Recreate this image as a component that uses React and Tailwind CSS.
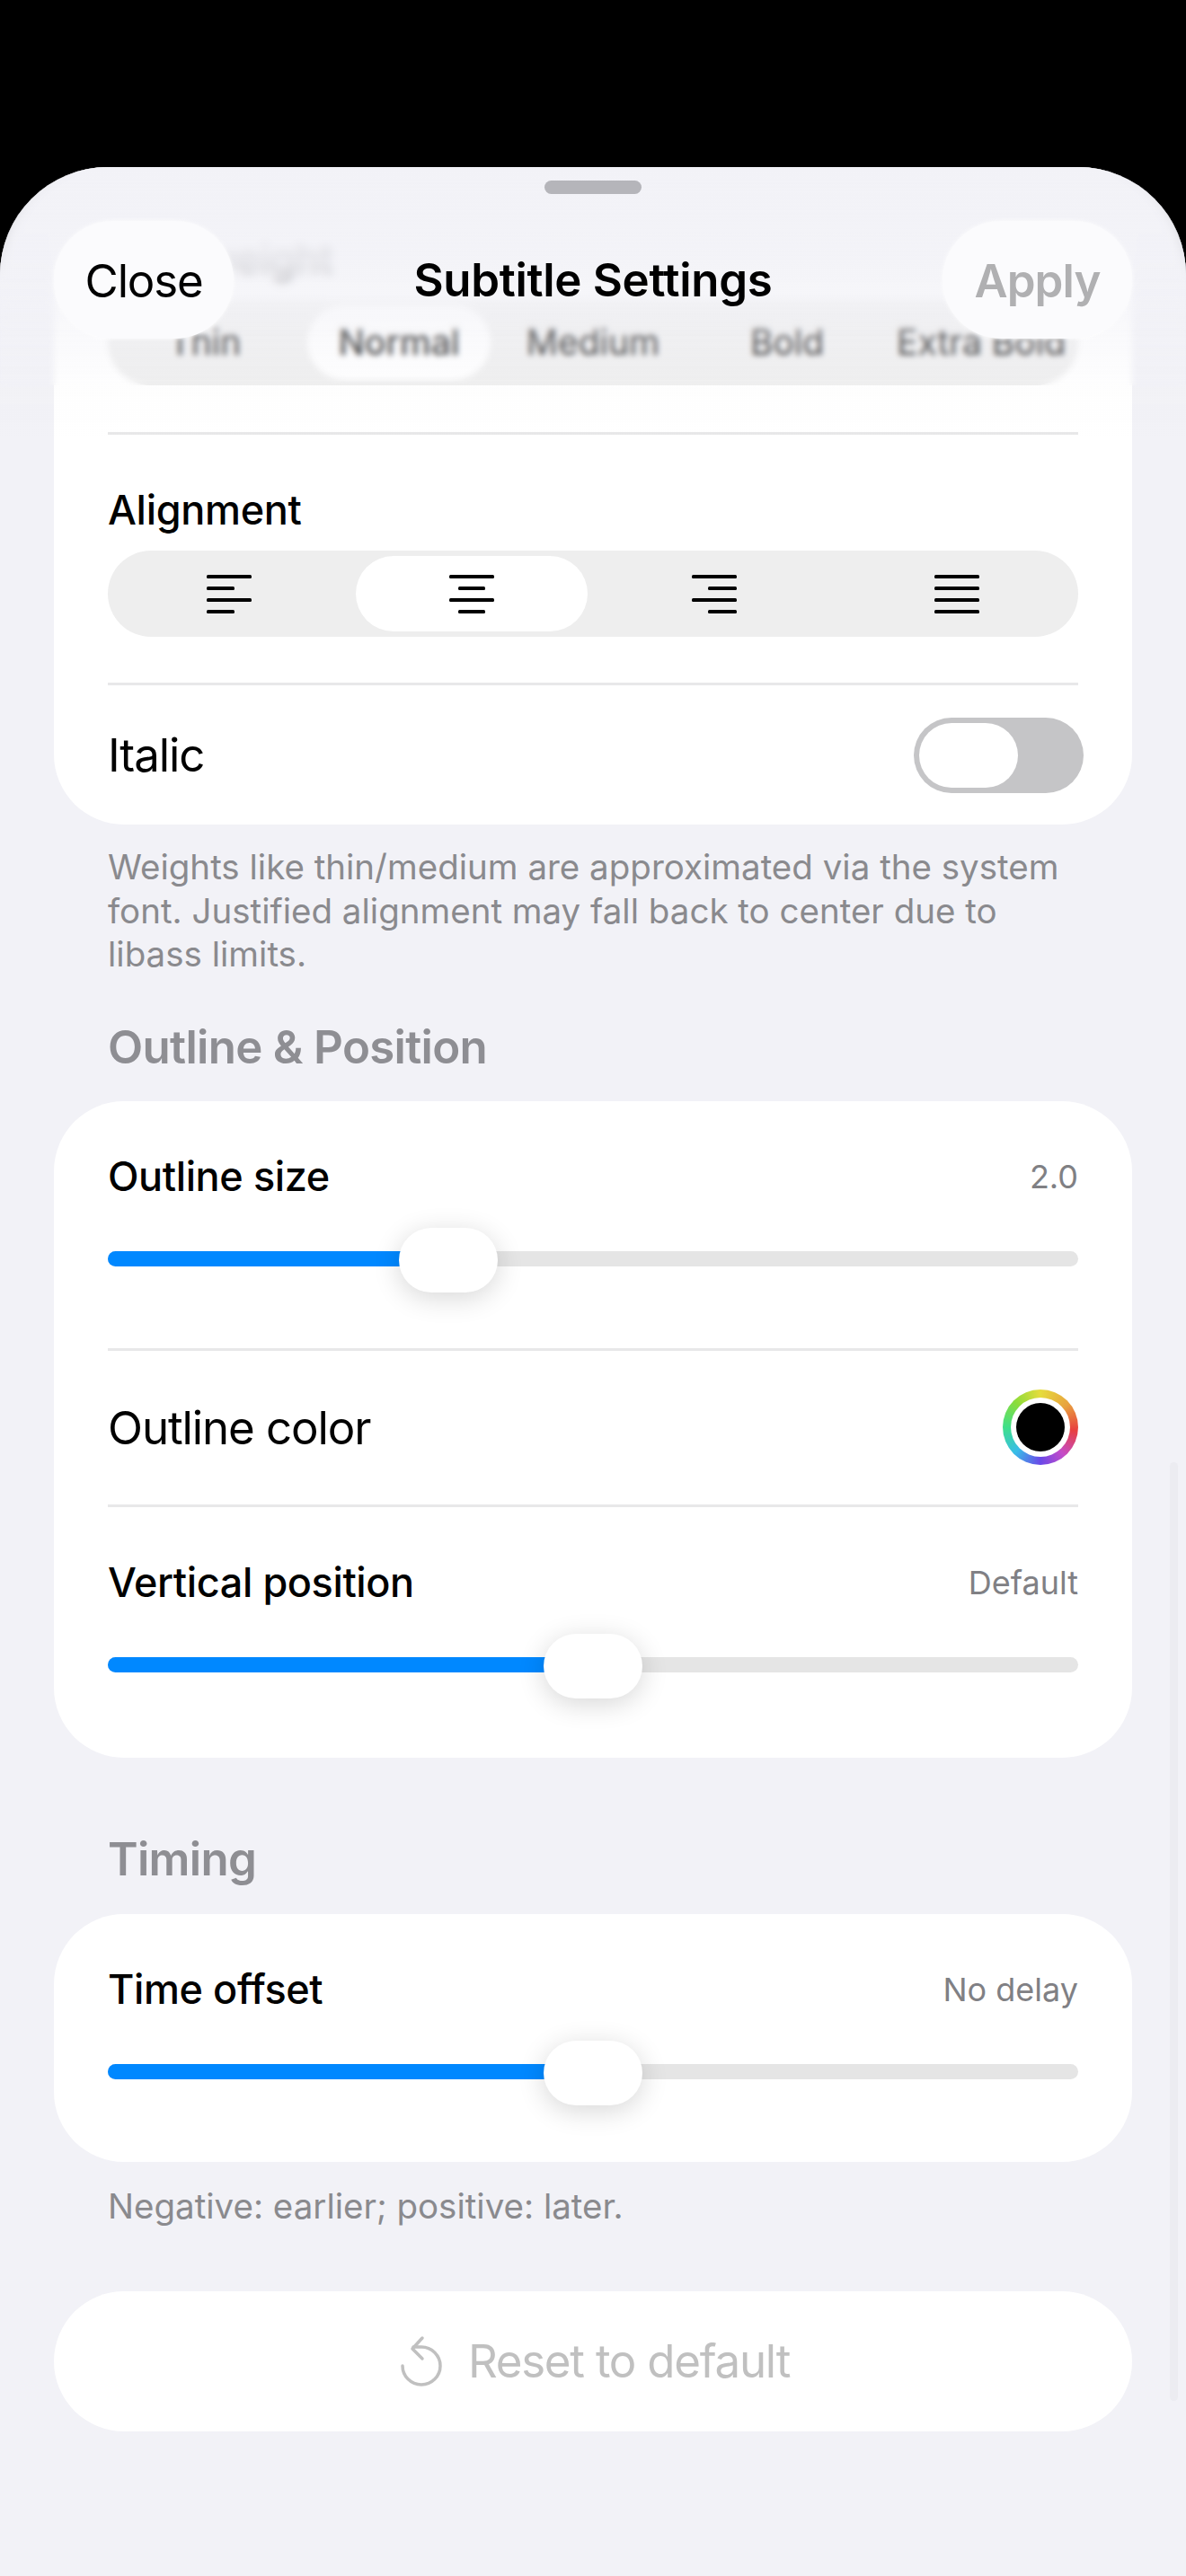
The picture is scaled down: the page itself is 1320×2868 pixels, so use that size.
const font = "font-['Inter','Noto_Sans',sans-serif]";

const weights = ["Thin", "Normal", "Medium", "Bold", "Extra Bold"];

const alignments = [
  { id: "left", lines: [[0, 50], [0, 31], [0, 50], [0, 31]] },
  { id: "center", lines: [[0, 50], [10, 30], [0, 50], [10, 30]] },
  { id: "right", lines: [[0, 50], [18, 32], [0, 50], [18, 32]] },
  { id: "justify", lines: [[0, 50], [0, 50], [0, 50], [0, 50]] },
];

const AlignIcon = ({ lines }) => (
  <svg width="50" height="44" viewBox="0 0 50 44" fill="none">
    {lines.map(([x, w], i) => (
      <rect key={i} x={x} y={1 + i * 13} width={w} height="4" rx="1.5" fill="#000" />
    ))}
  </svg>
);

const Divider = () => <div className="h-[3px] bg-[#e8e8e9]" />;

const Slider = ({ label, value, fill }) => (
  <div className="pt-[57px]">
    <div className="flex h-[54px] items-center justify-between">
      <span className="text-[45px] leading-[54px] font-medium text-black tracking-[-0.4px]">{label}</span>
      <span className="text-[36px] text-[#808084]">{value}</span>
    </div>
    <div className="relative mt-[30px] flex h-[72px] items-center">
      <div className="mb-[3px] h-[17px] w-full overflow-hidden rounded-full bg-[#e5e5e5]">
        <div className="h-full bg-[#0088ff]" style={{ width: `calc(${fill} + 10px)` }} />
      </div>
      <div
        className="absolute top-0 h-[72px] w-[110px] rounded-full bg-white shadow-[0_6px_30px_rgba(0,0,0,0.16)]"
        style={{ left: fill }}
      />
    </div>
  </div>
);

const Heading = ({ children, className }) => (
  <h2 className={`pl-[120px] text-[51px] leading-[60px] font-semibold text-[#8e8e93] tracking-[-0.7px] ${className}`}>
    {children}
  </h2>
);

const Note = ({ children, className }) => (
  <p className={`px-[120px] text-[38.5px] leading-[48.5px] text-[#8a8a8e] ${className}`}>{children}</p>
);

export default function App() {
  return (
    <div className={`h-[2868px] overflow-hidden bg-black pt-[186px] ${font}`}>
      <div className="relative h-[2682px] overflow-hidden rounded-t-[120px] bg-[#f2f2f7]">
        {/* scrolled content */}
        <div className="px-[60px] pt-[18px]">
          <section className="rounded-[78px] bg-white px-[60px]">
            <div className="pt-[57px]">
              <div className="text-[45px] leading-[54px] font-medium text-black">Font weight</div>
              <div className="mt-[18px] grid h-[96px] grid-cols-5 rounded-full bg-[#eeeeee] py-[6px]">
                {weights.map((w) => (
                  <div
                    key={w}
                    className={`mx-[6px] flex items-center justify-center whitespace-nowrap rounded-full text-[39px] text-black ${
                      w === "Normal" ? "bg-white font-medium" : ""
                    }`}
                  >
                    {w}
                  </div>
                ))}
              </div>
            </div>
            <div className="mt-[52px]">
              <Divider />
            </div>
            <div className="pt-[57px]">
              <div className="text-[45px] leading-[54px] font-medium text-black tracking-[-0.3px]">Alignment</div>
              <div className="mt-[18px] grid h-[96px] grid-cols-4 rounded-full bg-[#eeeeee] py-[6px]">
                {alignments.map((a) => (
                  <div
                    key={a.id}
                    className={`mx-[6px] flex items-center justify-center rounded-full ${
                      a.id === "center" ? "bg-white" : ""
                    }`}
                  >
                    <AlignIcon lines={a.lines} />
                  </div>
                ))}
              </div>
            </div>
            <div className="mt-[51px]">
              <Divider />
            </div>
            <div className="flex h-[155px] items-center justify-between">
              <span className="pt-[2px] text-[51px] text-black tracking-[-1.1px]">Italic</span>
              <div className="mr-[-6px] h-[84px] w-[189px] rounded-full bg-[#c5c5c7] p-[6px]">
                <div className="h-[72px] w-[110px] rounded-full bg-white" />
              </div>
            </div>
          </section>
        </div>

        <Note className="mt-[23px]">
          Weights like thin/medium are approximated via the system font. Justified alignment may fall back to center
          due to libass limits.
        </Note>

        <Heading className="mt-[49px]">Outline &amp; Position</Heading>

        <div className="mt-[30px] px-[60px]">
          <section className="rounded-[78px] bg-white px-[60px]">
            <Slider label="Outline size" value="2.0" fill="30%" />
            <div className="mt-[62px]">
              <Divider />
            </div>
            <div className="flex h-[171px] items-center justify-between">
              <span className="pt-[2px] text-[51px] text-black tracking-[-1.1px]">Outline color</span>
              <div className="flex h-[84px] w-[84px] items-center justify-center rounded-full bg-[conic-gradient(#e6dc3c_0deg,#e8a23f_50deg,#e8403f_95deg,#c44cc8_140deg,#6a48e8_180deg,#38bde8_225deg,#3fe08a_270deg,#8bdc3a_315deg,#e6dc3c_360deg)]">
                <div className="flex h-[66px] w-[66px] items-center justify-center rounded-full bg-white">
                  <div className="h-[54px] w-[54px] rounded-full bg-black" />
                </div>
              </div>
            </div>
            <Divider />
            <Slider label="Vertical position" value="Default" fill="44.9%" />
            <div className="h-[66px]" />
          </section>
        </div>

        <Heading className="mt-[83px]">Timing</Heading>

        <div className="mt-[31px] px-[60px]">
          <section className="rounded-[78px] bg-white px-[60px] pb-[63px]">
            <Slider label="Time offset" value="No delay" fill="44.9%" />
          </section>
        </div>

        <Note className="mt-[25px]">Negative: earlier; positive: later.</Note>

        <div className="mt-[71px] px-[60px]">
          <button className="flex h-[156px] w-full items-center justify-center gap-[24px] rounded-full bg-white text-[51px] tracking-[-1.25px] text-[#c0c0c0]">
            <svg width="56" height="68" viewBox="0 0 56 68" fill="none" stroke="#c0c0c0" strokeWidth="3.5" strokeLinecap="round" strokeLinejoin="round">
              <path d="M7 39A21 21 0 1 0 28 18H19" />
              <path d="M29 8 18 20 29 31" />
            </svg>
            Reset to default
          </button>
        </div>

        {/* scroll indicator */}
        <div className="absolute left-[1302px] top-[1442px] h-[1045px] w-[9px] rounded-full bg-[#ececf1]" />

        {/* blurred top bar: stronger towards the top */}
        <div className="absolute inset-x-0 top-0 h-[243px] backdrop-blur-[3px]" />
        <div className="absolute inset-x-0 top-0 h-[190px] backdrop-blur-[5px] [mask-image:linear-gradient(to_bottom,black_60%,transparent)]" />
        <div className="absolute inset-x-0 top-0 h-[300px] bg-[linear-gradient(to_bottom,#f2f2f7_0%,rgba(242,242,247,0.9)_35%,rgba(242,242,247,0.45)_60%,rgba(242,242,247,0.12)_80%,rgba(242,242,247,0)_100%)]" />
        <header className="absolute inset-x-0 top-0 px-[60px]">
          <div className="mx-auto mt-[15px] h-[15px] w-[108px] rounded-full bg-[#b5b5ba]" />
          <div className="relative mt-[30px] grid h-[131px] grid-cols-[211px_1fr_211px] items-center">
            <button className="h-[131px] w-[200px] rounded-full bg-[#fbfbfd] pt-[3px] text-[51px] tracking-[-1.2px] text-black shadow-[0_0_4px_rgba(255,255,255,0.9)]">
              Close
            </button>
            <span className="pt-[2px] text-center text-[51px] font-semibold text-black tracking-[-0.3px]">Subtitle Settings</span>
            <button className="h-[131px] w-[211px] rounded-full bg-[#fbfbfd] pt-[3px] text-[51px] font-semibold tracking-[-0.9px] text-[#b0b0b2] shadow-[0_0_4px_rgba(255,255,255,0.9)]">
              Apply
            </button>
          </div>
        </header>
      </div>
    </div>
  );
}
